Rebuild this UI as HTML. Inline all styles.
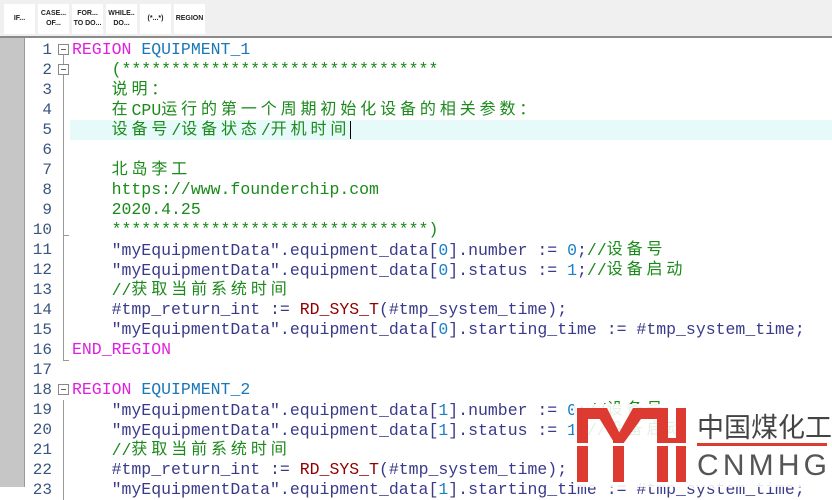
<!DOCTYPE html><html><head><meta charset="utf-8"><style>
body{margin:0;width:832px;height:487px;overflow:hidden;background:#fff;position:relative;font-family:"Liberation Mono","Noto Sans CJK SC",monospace}
#tb{position:absolute;left:0;top:0;width:832px;height:36px;background:#f0f0f0;border-bottom:2px solid #8a8a8a}
.b{position:absolute;top:4px;width:31px;height:30px;background:#fff;font:bold 7px "Liberation Sans",sans-serif;color:#222;display:flex;align-items:center;justify-content:center;text-align:center;line-height:10px}
#gut{position:absolute;left:0;top:38px;width:24px;height:449px;background:#c6c6c6;border-right:1px solid #999}
.ln{position:absolute;left:26px;width:26px;text-align:right;font-size:16px;color:#3a5580;height:20px;line-height:20px}
.c{position:absolute;left:72px;font-size:16.5px;white-space:pre;height:20px;line-height:20px;color:#3a3a8a}
.z{font-family:"Noto Sans CJK SC",sans-serif;letter-spacing:3.9px;font-size:16px;line-height:16px;position:relative;top:-1px}
.k{color:#e020e0}.i{color:#1a78b8}.g{color:#1a8a1a}.n{color:#1a80c8}.r{color:#900000}
.fb{position:absolute;left:58px;width:9px;height:9px;border:1px solid #888;background:#fff}
.fb:after{content:"";position:absolute;left:2px;top:4px;width:5px;height:1px;background:#666}
</style></head><body>
<div id="tb">
<div class="b" style="left:4px">IF...</div>
<div class="b" style="left:38px">CASE...<br>OF...</div>
<div class="b" style="left:72px">FOR...<br>TO DO...</div>
<div class="b" style="left:106px">WHILE..<br>DO...</div>
<div class="b" style="left:140px">(*...*)</div>
<div class="b" style="left:174px">REGION</div>
</div>
<div id="gut"></div>
<div style="position:absolute;left:70px;top:120px;width:762px;height:20px;background:#e6fafa"></div>
<div style="position:absolute;left:63px;top:55px;width:1px;height:305px;background:#999"></div>
<div style="position:absolute;left:63px;top:235px;width:6px;height:1px;background:#999"></div>
<div style="position:absolute;left:63px;top:360px;width:6px;height:1px;background:#999"></div>
<div style="position:absolute;left:63px;top:400px;width:1px;height:100px;background:#999"></div>
<div class="fb" style="top:44px"></div><div class="fb" style="top:64px"></div><div class="fb" style="top:384px"></div>
<div style="position:absolute;left:350px;top:121px;width:1px;height:18px;background:#000"></div>

<div class="ln" style="top:40px">1</div><div class="c" style="top:40px"><span class="k">REGION</span> <span class="i">EQUIPMENT_1</span></div>
<div class="ln" style="top:60px">2</div><div class="c g" style="top:60px">    (********************************</div>
<div class="ln" style="top:80px">3</div><div class="c g" style="top:80px">    <span class="z">说明：</span></div>
<div class="ln" style="top:100px">4</div><div class="c g" style="top:100px">    <span class="z">在</span>CPU<span class="z">运行的第一个周期初始化设备的相关参数：</span></div>
<div class="ln" style="top:120px">5</div><div class="c g" style="top:120px">    <span class="z">设备号</span>/<span class="z">设备状态</span>/<span class="z">开机时间</span></div>
<div class="ln" style="top:140px">6</div>
<div class="ln" style="top:160px">7</div><div class="c g" style="top:160px">    <span class="z">北岛李工</span></div>
<div class="ln" style="top:180px">8</div><div class="c g" style="top:180px">    https://www.founderchip.com</div>
<div class="ln" style="top:200px">9</div><div class="c g" style="top:200px">    2020.4.25</div>
<div class="ln" style="top:220px">10</div><div class="c g" style="top:220px">    ********************************)</div>
<div class="ln" style="top:240px">11</div><div class="c" style="top:240px">    "myEquipmentData".equipment_data[<span class="n">0</span>].number := <span class="n">0</span>;<span class="g">//<span class="z">设备号</span></span></div>
<div class="ln" style="top:260px">12</div><div class="c" style="top:260px">    "myEquipmentData".equipment_data[<span class="n">0</span>].status := <span class="n">1</span>;<span class="g">//<span class="z">设备启动</span></span></div>
<div class="ln" style="top:280px">13</div><div class="c g" style="top:280px">    //<span class="z">获取当前系统时间</span></div>
<div class="ln" style="top:300px">14</div><div class="c" style="top:300px">    #tmp_return_int := <span class="r">RD_SYS_T</span>(#tmp_system_time);</div>
<div class="ln" style="top:320px">15</div><div class="c" style="top:320px">    "myEquipmentData".equipment_data[<span class="n">0</span>].starting_time := #tmp_system_time;</div>
<div class="ln" style="top:340px">16</div><div class="c k" style="top:340px">END_REGION</div>
<div class="ln" style="top:360px">17</div>
<div class="ln" style="top:380px">18</div><div class="c" style="top:380px"><span class="k">REGION</span> <span class="i">EQUIPMENT_2</span></div>
<div class="ln" style="top:400px">19</div><div class="c" style="top:400px">    "myEquipmentData".equipment_data[<span class="n">1</span>].number := <span class="n">0</span>;<span class="g">//<span class="z">设备号</span></span></div>
<div class="ln" style="top:420px">20</div><div class="c" style="top:420px">    "myEquipmentData".equipment_data[<span class="n">1</span>].status := <span class="n">1</span>;<span class="g">//<span class="z">设备启动</span></span></div>
<div class="ln" style="top:440px">21</div><div class="c g" style="top:440px">    //<span class="z">获取当前系统时间</span></div>
<div class="ln" style="top:460px">22</div><div class="c" style="top:460px">    #tmp_return_int := <span class="r">RD_SYS_T</span>(#tmp_system_time);</div>
<div class="ln" style="top:480px">23</div><div class="c" style="top:480px">    "myEquipmentData".equipment_data[<span class="n">1</span>].starting_time := #tmp_system_time;</div>

<div style="position:absolute;left:574px;top:404px;width:258px;height:83px;background:rgba(255,255,255,0.88)"></div>
<svg style="position:absolute;left:577px;top:408px" width="110" height="76" viewBox="0 0 110 76">
<g fill="#dd3a32">
<rect x="0" y="0" width="11" height="74"/>
<rect x="0" y="0" width="26" height="11"/>
<polygon points="16,0 30,0 46,32 38,36"/>
<polygon points="56,0 80,0 80,11 64,11 46,36 38,32"/>
<rect x="36" y="32" width="11" height="42"/>
<rect x="80" y="0" width="11" height="74"/>
<rect x="99" y="0" width="10" height="74"/>
<rect x="80" y="30" width="29" height="8"/>
</g>
<rect x="0" y="35" width="110" height="3" fill="#fff"/>
</svg>
<div style="position:absolute;left:697px;top:408px;width:130px;display:flex;justify-content:space-between;font:27px 'Noto Sans CJK SC',sans-serif;color:#444;line-height:36px;white-space:nowrap"><span>中</span><span>国</span><span>煤</span><span>化</span><span>工</span></div>
<div style="position:absolute;left:697px;top:443px;width:130px;height:3px;background:#dd3a32"></div>
<div style="position:absolute;left:697px;top:450px;width:130px;display:flex;justify-content:space-between;font:30px 'Liberation Sans',sans-serif;color:#555;line-height:32px;white-space:nowrap"><span>C</span><span>N</span><span>M</span><span>H</span><span>G</span></div>
</body></html>
